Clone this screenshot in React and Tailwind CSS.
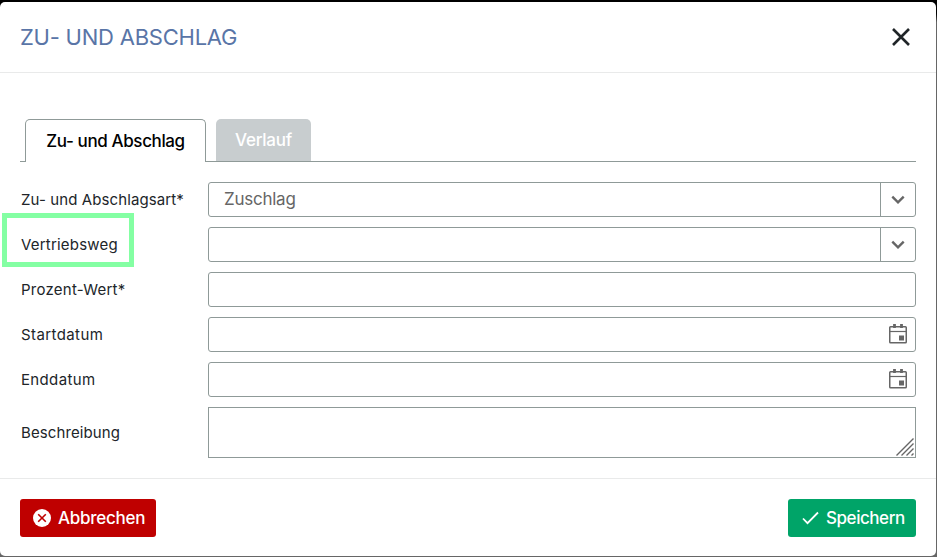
import { useState } from 'react';

function ChevronIcon() {
  return (
    <svg width="14" height="10" viewBox="0 0 14 10" fill="none" stroke="#666666" strokeWidth="2.4">
      <path d="M1.3 1.7 7 7.4l5.7-5.7" />
    </svg>
  );
}

function CalendarIcon() {
  return (
    <svg width="18" height="20" viewBox="0 0 18 20" fill="none" stroke="#666666">
      <rect x=".75" y="2.75" width="16.5" height="16" rx=".8" strokeWidth="1.5" />
      <path d="M1 7.5h16" strokeWidth="1.2" />
      <path d="M5.5 0v4M12.5 0v4" strokeWidth="2.8" />
      <rect x="10" y="11.5" width="5" height="5" fill="#666666" stroke="none" />
    </svg>
  );
}

function Label({ htmlFor, className, children }) {
  return (
    <label htmlFor={htmlFor} className="w-[188px] shrink-0 pl-px text-[15px] leading-5 text-[#212529]">
      <span className={className}>{children}</span>
    </label>
  );
}

function SelectField({ id, value }) {
  return (
    <div className="flex h-[35px] flex-1 rounded-[3px] border border-[#8f9a98]">
      <div id={id} className="flex-1 pl-[15px] text-[17px] leading-[33px] tracking-[-0.25px] text-[#666666]">
        {value}
      </div>
      <button aria-label="Auswahl öffnen" className="flex w-[35px] items-center justify-center border-l border-[#8f9a98]">
        <ChevronIcon />
      </button>
    </div>
  );
}

function DateField({ id }) {
  return (
    <div className="flex h-[35px] flex-1 items-center rounded-[3px] border border-[#8f9a98] pr-2">
      <input id={id} type="text" className="h-full min-w-0 flex-1 px-4 outline-none" />
      <button aria-label="Kalender öffnen" className="pb-0.5">
        <CalendarIcon />
      </button>
    </div>
  );
}

export default function App() {
  const [percent, setPercent] = useState('');

  return (
    <div className="h-[557px] w-[937px] overflow-hidden bg-gradient-to-b from-black from-[2%] to-[#666666] to-[4%] pt-0.5 pr-px pb-px font-['Inter',sans-serif]">
      <div className="flex h-[554px] flex-col rounded-[5px] bg-white">
        {/* Header */}
        <header className="flex h-[71px] shrink-0 items-center justify-between border-b border-[#e9eaea] pr-[26px] pl-5">
          <h1 className="text-[22px] leading-7 tracking-[-0.23px] text-[#5975a7]">ZU- UND ABSCHLAG</h1>
          <button aria-label="Schließen">
            <svg width="18" height="18" viewBox="0 0 18 18" fill="none" stroke="#202528" strokeWidth="2.6">
              <path d="m1 1 16 16M17 1 1 17" />
            </svg>
          </button>
        </header>

        <main className="flex-1 px-5 pt-[46px]">
          {/* Tabs */}
          <div className="flex h-[43px]">
            <div className="w-[5px] border-b border-[#8f9a98]" />
            <button className="w-[181px] rounded-t-[5px] border border-b-0 border-[#8f9a98] pt-0.5 text-[17px] font-medium text-black">
              <span className="tracking-[-0.38px]">Zu- und Abschlag</span>
            </button>
            <div className="flex flex-1 border-b border-[#8f9a98] pl-2.5">
              <button className="w-[95px] rounded-t-[5px] bg-[#c8cdcf] pt-0.5 text-[17px] font-medium text-white">
                <span className="tracking-[-0.25px]">Verlauf</span>
              </button>
            </div>
          </div>

          {/* Form */}
          <form className="mt-5 flex flex-col gap-2.5">
            <div className="flex items-center">
              <Label htmlFor="type" className="tracking-[0.1px]">Zu- und Abschlagsart*</Label>
              <SelectField id="type" value="Zuschlag" />
            </div>
            <div className="relative flex items-center">
              <Label htmlFor="channel" className="tracking-[0.2px]">Vertriebsweg</Label>
              <SelectField id="channel" value="" />
              <div className="pointer-events-none absolute -top-[14px] -left-[18px] h-[54px] w-[132px] border-[5px] border-[#84ffa3]" />
            </div>
            <div className="flex items-center">
              <Label htmlFor="percent" className="tracking-[0.25px]">Prozent-Wert*</Label>
              <input
                id="percent"
                type="text"
                value={percent}
                onChange={(e) => setPercent(e.target.value)}
                className="h-[35px] min-w-0 flex-1 rounded-[3px] border border-[#8f9a98] px-4 outline-none"
              />
            </div>
            <div className="flex items-center">
              <Label htmlFor="start" className="tracking-[0.4px]">Startdatum</Label>
              <DateField id="start" />
            </div>
            <div className="flex items-center">
              <Label htmlFor="end" className="tracking-[0.35px]">Enddatum</Label>
              <DateField id="end" />
            </div>
            <div className="relative flex items-center">
              <Label htmlFor="description" className="tracking-[0.1px]">Beschreibung</Label>
              <textarea id="description" className="h-[51px] min-w-0 flex-1 resize-none border border-[#8f9a98] px-4 outline-none" />
              <svg className="pointer-events-none absolute right-0.5 bottom-0.5" width="18" height="18" viewBox="0 0 18 18" fill="none" stroke="#666666" strokeWidth="1.4">
                <path d="M.5 17.5l17-17M5.5 17.5l12-12M10.5 17.5l7-7M15.5 17.5l2-2" />
              </svg>
            </div>
          </form>
        </main>

        {/* Footer */}
        <footer className="flex h-[78px] shrink-0 justify-between border-t border-[#e9eaea] px-5 pt-5">
          <button className="flex h-[38px] w-[136px] items-center rounded-[3px] bg-[#bf0000] pl-[13px] text-[17px] font-medium text-white">
            <svg width="18" height="18" viewBox="0 0 18 18" fill="none">
              <circle cx="9" cy="9" r="9" fill="white" />
              <path d="m5.2 5.2 7.6 7.6M12.8 5.2l-7.6 7.6" stroke="#bf0000" strokeWidth="1.6" />
            </svg>
            <span className="ml-[7px] pt-0.5 tracking-[-0.25px]">Abbrechen</span>
          </button>
          <button className="flex h-[38px] w-32 items-center rounded-[3px] bg-[#00a468] pl-3.5 text-[17px] font-medium text-white">
            <svg width="17" height="14" viewBox="0 0 17 14" fill="none" stroke="white" strokeWidth="1.8">
              <path d="m1 7.5 4.5 4.7L16 1.5" />
            </svg>
            <span className="ml-[7px] pt-0.5 tracking-[-0.45px]">Speichern</span>
          </button>
        </footer>
      </div>
    </div>
  );
}
